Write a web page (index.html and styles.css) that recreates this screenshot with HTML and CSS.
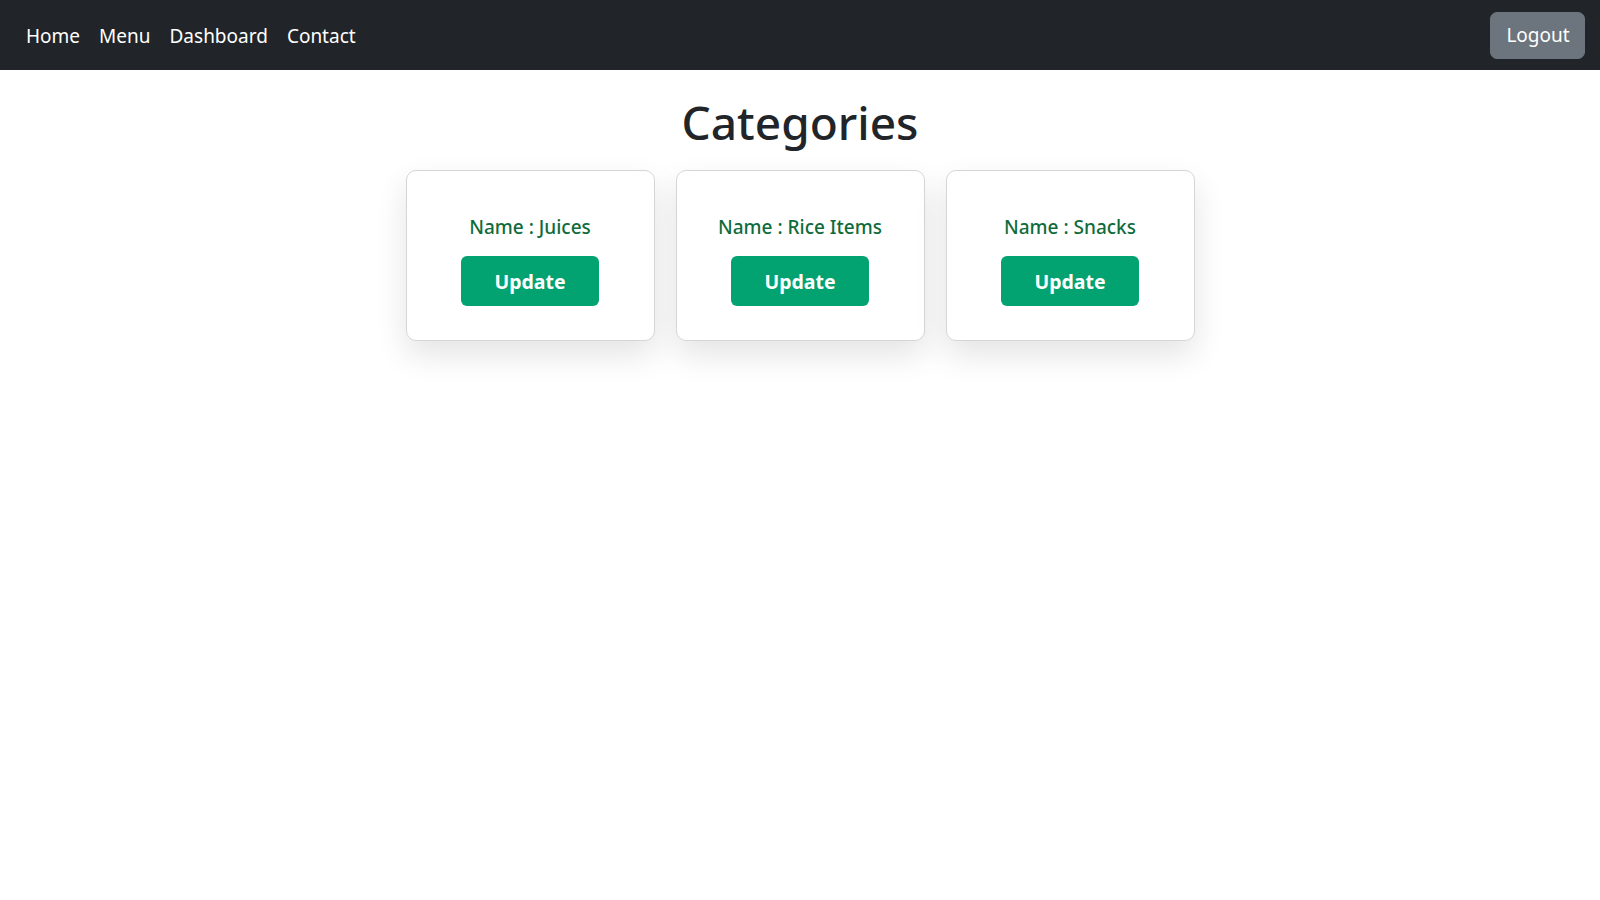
FILE: index.html
```html
<!DOCTYPE html>
<html lang="en">
<head>
<meta charset="utf-8">
<title>Categories</title>
<link rel="stylesheet" href="styles.css">
</head>
<body>
<nav class="navbar">
  <ul class="nav-links">
    <li><a href="#">Home</a></li>
    <li><a href="#">Menu</a></li>
    <li><a href="#">Dashboard</a></li>
    <li><a href="#">Contact</a></li>
  </ul>
  <button class="btn-logout">Logout</button>
</nav>
<main class="page">
  <h1 class="title">Categories</h1>
  <div class="cards">
    <div class="card">
      <h5 class="card-name">Name : Juices</h5>
      <button class="btn-update">Update</button>
    </div>
    <div class="card">
      <h5 class="card-name">Name : Rice Items</h5>
      <button class="btn-update">Update</button>
    </div>
    <div class="card">
      <h5 class="card-name">Name : Snacks</h5>
      <button class="btn-update">Update</button>
    </div>
  </div>
</main>
</body>
</html>
```
FILE: styles.css
```css
* { box-sizing: border-box; }
html, body {
  margin: 0;
  padding: 0;
  background: #fff;
  font-family: "Noto Sans", "Open Sans", sans-serif;
  color: #212529;
}
.navbar {
  height: 70px;
  background: #212529;
  display: flex;
  align-items: center;
  justify-content: space-between;
  padding: 0 15px 0 26px;
}
.nav-links {
  list-style: none;
  margin: 0;
  padding: 0;
  display: flex;
  gap: 19px;
  padding-top: 2px;
}
.nav-links a {
  color: #fff;
  text-decoration: none;
  font-size: 19px;
  line-height: 30px;
}
.btn-logout {
  font-family: inherit;
  font-size: 19px;
  color: #fff;
  background: #6c757d;
  border: 1px solid #6c757d;
  border-radius: 7px;
  width: 95px;
  height: 47px;
  padding: 0 0 0 1px;
}
.page {
  display: flex;
  flex-direction: column;
  align-items: center;
  padding-bottom: 80px;
}
.title {
  margin: 24px 0 0;
  font-size: 46px;
  font-weight: 500;
  line-height: 56px;
}
.cards {
  margin-top: 20px;
  display: flex;
  gap: 21px;
}
.card {
  width: 249px;
  height: 171px;
  border: 1px solid #d6d6d6;
  border-radius: 10px;
  background: #fff;
  box-shadow: 0 14px 32px rgba(0, 0, 0, 0.11);
  display: flex;
  flex-direction: column;
  align-items: center;
  padding-top: 44px;
}
.card-name {
  margin: 0;
  font-size: 19px;
  font-weight: 500;
  line-height: 24px;
  color: #0f6b3b;
}
.btn-update {
  margin-top: 17px;
  width: 138px;
  height: 50px;
  border: none;
  border-radius: 6px;
  background: #02a271;
  color: #fff;
  font-family: inherit;
  font-size: 19.5px;
  font-weight: 700;
  padding: 0;
}
```
